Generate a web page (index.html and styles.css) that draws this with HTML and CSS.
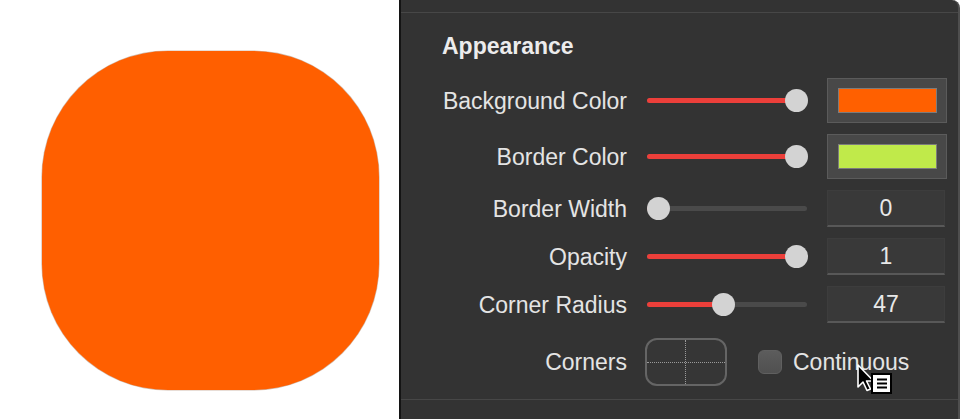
FILE: index.html
```html
<!DOCTYPE html>
<html lang="en">
<head>
  <meta charset="UTF-8" />
  <meta name="viewport" content="width=device-width, initial-scale=1.0" />
  <title>Appearance</title>
  <link rel="stylesheet" href="styles.css">
</head>
<body>
  <div class="canvas">
    <div class="shape"></div>
  </div>

  <aside class="panel">
    <div class="panel-top"></div>
    <section class="section">
      <h2>Appearance</h2>
      <div class="rows">
        <label>Background Color</label>
        <div class="slider" style="--v:1"><div class="fill"></div><div class="thumb"></div></div>
        <div class="swatch"><span class="swatch-color orange"></span></div>

        <label>Border Color</label>
        <div class="slider" style="--v:1"><div class="fill"></div><div class="thumb"></div></div>
        <div class="swatch"><span class="swatch-color lime"></span></div>

        <label>Border Width</label>
        <div class="slider" style="--v:0"><div class="fill"></div><div class="thumb"></div></div>
        <div class="field">0</div>

        <label>Opacity</label>
        <div class="slider" style="--v:1"><div class="fill"></div><div class="thumb"></div></div>
        <div class="field">1</div>

        <label>Corner Radius</label>
        <div class="slider" style="--v:0.47"><div class="fill"></div><div class="thumb"></div></div>
        <div class="field">47</div>

        <label class="corners-label">Corners</label>
        <div class="corners-row">
          <div class="corners-box">
            <span class="dot-v"></span>
            <span class="dot-h"></span>
          </div>
          <span class="checkbox"></span>
          <span class="check-text">Continuous</span>
          <!-- context menu cursor -->
          <svg class="cursor" width="40" height="36" viewBox="0 0 40 36">
            <path d="M2 2 L2 24 L7 19 L11 27.5 L14.5 26 L10.5 18 L17.5 18 Z" fill="#000" stroke="#fff" stroke-width="1.6" stroke-linejoin="round"/>
            <rect x="16" y="11" width="19" height="19" fill="#fff" stroke="#000" stroke-width="2"/>
            <rect x="21" y="15.5" width="10" height="2" fill="#000"/>
            <rect x="21" y="19.5" width="10" height="2" fill="#000"/>
            <rect x="21" y="23.5" width="10" height="2" fill="#000"/>
          </svg>
        </div>
      </div>
    </section>
    <div class="panel-bottom"></div>
  </aside>
</body>
</html>
```

FILE: styles.css
```css
body {
  margin: 0;
  display: flex;
  height: 419px;
  overflow: hidden;
  background: #fff;
  font-family: "Liberation Sans", Arial, sans-serif;
}
.canvas {
  flex: none;
  width: 399px;
  padding: 51px 0 0 42px;
  box-sizing: border-box;
}
.shape {
  width: 337px;
  height: 339px;
  background: #ff5f00;
  border-radius: 126px;
  box-shadow: 0 0 0 0.6px rgba(120, 60, 20, 0.35);
}
.panel {
  flex: 1;
  display: flex;
  flex-direction: column;
  background: #333333;
  border-left: 2px solid #141414;
  border-right: 2px solid #4e4e4e;
  border-top-right-radius: 8px;
  color: #e4e4e4;
}
.panel-top {
  height: 12px;
  border-bottom: 1px solid #474747;
}
.section {
  padding: 19px 0 13px 41px;
  border-bottom: 1px solid #474747;
}
h2 {
  margin: 0 0 18px;
  font-size: 23px;
  line-height: 28px;
  font-weight: bold;
  color: #ececec;
}
.rows {
  display: grid;
  grid-template-columns: 185px 160px 120px;
  grid-template-rows: 45px 45px 37px 37px 37px 52px;
  column-gap: 20px;
  row-gap: 11px;
  align-items: center;
}
.rows label {
  text-align: right;
  font-size: 23px;
  line-height: 28px;
  white-space: nowrap;
}
.slider {
  position: relative;
  height: 5px;
  border-radius: 3px;
  background: #4a4a4a;
}
.fill {
  position: absolute;
  left: 0;
  top: 0;
  bottom: 0;
  width: calc(11px + var(--v) * 138px);
  border-radius: 3px;
  background: #ec3f3a;
}
.thumb {
  position: absolute;
  top: -9px;
  left: calc(var(--v) * 138px);
  width: 23px;
  height: 23px;
  border-radius: 50%;
  background: #d3d3d3;
}
.swatch {
  height: 45px;
  box-sizing: border-box;
  border: 1px solid #5b5b5b;
  background: #484848;
  padding: 9px 9px 9px 10px;
}
.swatch-color {
  display: block;
  height: 100%;
  box-sizing: border-box;
  border: 1px solid #7c7c7c;
}
.orange { background: #ff6000; }
.lime { background: #c0ea4a; }
.field {
  height: 37px;
  margin-right: 2px;
  box-sizing: border-box;
  border: 1px solid #3d3d3d;
  border-bottom: 2px solid #585858;
  background: #393939;
  text-align: center;
  font-size: 23px;
  line-height: 34px;
  color: #e8e8e8;
}
.corners-label,
.corners-row {
  margin-top: 4px;
}
.corners-row {
  grid-column: 2 / 4;
  position: relative;
  display: flex;
  align-items: center;
  height: 48px;
}
.corners-box {
  position: relative;
  width: 82px;
  height: 48px;
  margin-left: -2px;
  box-sizing: border-box;
  border: 2px solid #656565;
  border-radius: 12px;
  background: #363636;
}
.dot-v {
  position: absolute;
  left: 38px;
  top: 0;
  bottom: 0;
  border-left: 1px dotted #9a9a9a;
}
.dot-h {
  position: absolute;
  top: 22px;
  left: 0;
  right: 0;
  border-top: 1px dotted #9a9a9a;
}
.checkbox {
  width: 24px;
  height: 24px;
  margin-left: 31px;
  box-sizing: border-box;
  border: 1px solid #606060;
  border-radius: 6px;
  background: linear-gradient(#5c5c5c, #505050);
}
.check-text {
  margin-left: 11px;
  font-size: 23px;
  color: #e4e4e4;
}
.cursor {
  position: absolute;
  left: 209px;
  top: 25px;
}
.panel-bottom {
  flex: 1;
}
```
